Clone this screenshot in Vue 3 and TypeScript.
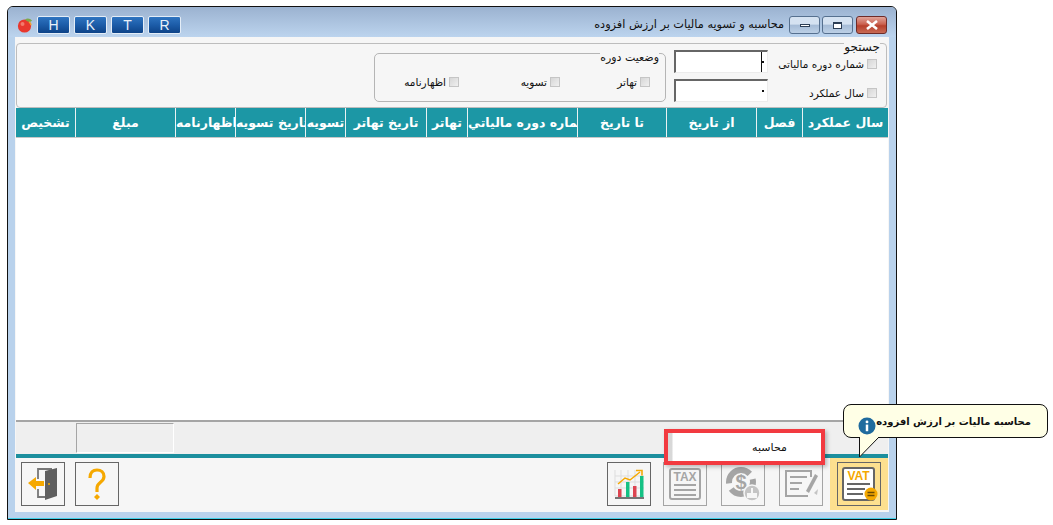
<script setup lang="ts">
const quickButtons = ['H', 'K', 'T', 'R'];

const columns = [
  { label: 'سال عملکرد', width: 86 },
  { label: 'فصل', width: 46 },
  { label: 'از تاریخ', width: 90 },
  { label: 'تا تاریخ', width: 89 },
  { label: 'شماره دوره مالیاتي', width: 110 },
  { label: 'تهاتر', width: 41 },
  { label: 'تاریخ تهاتر', width: 81 },
  { label: 'تسویه', width: 40 },
  { label: 'تاریخ تسویه', width: 70 },
  { label: 'اظهارنامه', width: 60 },
  { label: 'مبلغ', width: 100 },
  { label: 'تشخیص', width: 59 },
];

const statusOptions = ['تهاتر', 'تسویه', 'اظهارنامه'];
</script>

<template>
  <div class="page">
    <div class="window">
      <div class="titlebar">
        <div class="controls">
          <button class="ctl close">
            <svg width="14" height="10" viewBox="0 0 14 10"><path d="M2 1l10 8M12 1L2 9" stroke="#fff" stroke-width="2.6" /></svg>
          </button>
          <button class="ctl"><span class="max-glyph"></span></button>
          <button class="ctl"><span class="min-glyph"></span></button>
        </div>
        <div class="title">محاسبه و تسویه مالیات بر ارزش افزوده</div>
        <div class="spacer"></div>
        <div class="quick">
          <button v-for="b in quickButtons" :key="b" class="quick-btn">{{ b }}</button>
        </div>
        <svg class="apple" width="16" height="16" viewBox="0 0 16 16">
          <circle cx="7.5" cy="9" r="6.6" fill="#e8382e" />
          <circle cx="5.5" cy="7" r="2" fill="#f47a6c" />
          <path d="M8 2.6C10 .9 13 1.2 15 3.6 13.6 5.8 10.5 5 8 2.6Z" fill="#7fa84a" />
          <path d="M12 5c1.4.8 2 2 2 3.200" stroke="#f0a030" stroke-width="1.500" fill="none" />
        </svg>
      </div>

      <div class="body">
        <div class="filter">
          <fieldset class="search">
            <legend>جستجو</legend>
            <div class="search-row">
              <label class="check"><i class="box"></i><span>شماره دوره مالیاتی</span></label>
              <div class="field"><span class="caret"></span><span class="dot"></span></div>
            </div>
            <div class="search-row">
              <label class="check"><i class="box"></i><span>سال عملکرد</span></label>
              <div class="field"><span class="dot"></span></div>
            </div>
          </fieldset>
          <fieldset class="status">
            <legend>وضعیت دوره</legend>
            <label v-for="o in statusOptions" :key="o" class="check"><i class="box"></i><span>{{ o }}</span></label>
          </fieldset>
        </div>

        <div class="grid-head">
          <div
            v-for="c in columns"
            :key="c.label"
            class="col"
            :style="{ width: c.width + 'px' }"
          ><span>{{ c.label }}</span></div>
        </div>

        <div class="grid-body"></div>

        <div class="statusbar">
          <div class="sum-cell"></div>
        </div>

        <div class="toolbar">
          <div class="tools-left">
            <button class="tool">
              <svg width="34" height="36" viewBox="0 0 34 36">
                <path d="M26 3H12v10M12 23v8h8" fill="none" stroke="#777" stroke-width="1.800" />
                <path d="M19 5l12-3v28l-12 4Z" fill="#5f5f5f" />
                <circle cx="23" cy="18" r="1" fill="#f5a800" />
                <path d="M2 17l8-6v4h8v5h-8v4Z" fill="#f5a800" />
              </svg>
            </button>
            <button class="tool">
              <svg width="18" height="33" viewBox="0 0 18 33">
                <path d="M2 10C2 4.500 5 2 9 2s7 2.500 7 6.500c0 6-7 5.500-7 11.500v4" fill="none" stroke="#f5a800" stroke-width="3.200" />
                <path d="M9 26l3 3-3 3-3-3Z" fill="#f5a800" />
              </svg>
            </button>
          </div>

          <div class="tools-right">
            <button class="tool">
              <svg width="34" height="34" viewBox="0 0 34 34">
                <path d="M3 3v26h29M3 9h29M3 15h29M3 21h29M9 3v26M16 3v26M23 3v26M30 3v26" stroke="#ddd" fill="none" />
                <rect x="6" y="22" width="3.500" height="8" fill="#dd4450" />
                <rect x="14" y="15" width="3.500" height="15" fill="#14c184" />
                <rect x="21" y="19" width="3.500" height="11" fill="#dd4450" />
                <rect x="28" y="9" width="3.500" height="21" fill="#14c184" />
                <path d="M3 31h29" stroke="#555" stroke-width="1.600" />
                <path d="M6 17l7-6 5 2 10-8" stroke="#f5a800" stroke-width="1.500" fill="none" />
                <path d="M24 3.500h6v5" stroke="#f5a800" stroke-width="1.500" fill="none" />
              </svg>
            </button>
            <button class="tool dim">
              <svg width="34" height="34" viewBox="0 0 34 34">
                <rect x="2" y="2" width="30" height="30" rx="2" fill="#f6f6f6" stroke="#a5a5a5" stroke-width="2" />
                <text x="17" y="14" text-anchor="middle" class="icon-text grey">TAX</text>
                <path d="M6 18h22M6 23h22M6 28h22" stroke="#a5a5a5" stroke-width="1.800" />
              </svg>
            </button>
            <button class="tool dim">
              <svg width="36" height="36" viewBox="0 0 36 36">
                <circle cx="16" cy="16" r="12" fill="none" stroke="#a5a5a5" stroke-width="6" stroke-dasharray="30 6" />
                <text x="16" y="23" text-anchor="middle" class="icon-dollar">$</text>
                <circle cx="27" cy="27" r="8" fill="#c4c4c4" stroke="#f6f6f6" stroke-width="1.500" />
                <path d="M27 22v5M23 28h8v3h-8Z" stroke="#f6f6f6" stroke-width="2" fill="#f6f6f6" />
              </svg>
            </button>
            <button class="tool dim">
              <svg width="36" height="32" viewBox="0 0 36 32">
                <path d="M28 9V3H3v25h22" fill="none" stroke="#a5a5a5" stroke-width="2" />
                <path d="M7 9h17M7 15h12M7 21h9" stroke="#a5a5a5" stroke-width="2" />
                <path d="M32 6l3 2-9 17-3-2Z" fill="#a5a5a5" />
                <path d="M31 25l4-4-1 6Z" fill="#c4c4c4" />
              </svg>
            </button>
            <div class="vat-slot">
              <button class="tool">
                <svg width="38" height="36" viewBox="0 0 38 36">
                  <rect x="3" y="2" width="31" height="32" rx="2" fill="#fff" stroke="#666" stroke-width="2" />
                  <text x="18.500" y="14" text-anchor="middle" class="icon-text orange">VAT</text>
                  <path d="M7 18h23M7 23h18M7 28h16" stroke="#666" stroke-width="1.800" />
                  <circle cx="31" cy="28" r="6.500" fill="#f5a800" />
                  <path d="M27.500 26.500h7M27.500 29.500h7" stroke="#6b4a00" stroke-width="1.500" />
                </svg>
              </button>
            </div>
          </div>

          <div class="popup"><span>محاسبه</span></div>
        </div>
      </div>
    </div>

    <div class="tip">
      <span>محاسبه مالیات بر ارزش افزوده</span>
      <svg class="info" width="18" height="18" viewBox="0 0 19 19">
        <circle cx="9.500" cy="9.500" r="9" fill="#1f6b9e" />
        <circle cx="9.500" cy="5.200" r="1.500" fill="#fff" />
        <rect x="8.200" y="8" width="2.600" height="7" fill="#fff" />
      </svg>
      <svg class="tail" width="30" height="22" viewBox="0 0 30 22">
        <path d="M.5 0V20L20 0" fill="#ffffe6" stroke="#111" stroke-width="1" />
      </svg>
    </div>
  </div>
</template>

<style>
html, body {
  margin: 0;
  background: #fff;
}
</style>

<style scoped>
.page {
  position: relative;
  width: 1053px;
  height: 525px;
  padding: 6px 0 0 7px;
  box-sizing: border-box;
  overflow: hidden;
  font-family: "DejaVu Sans", Tahoma, sans-serif;
  color: #111;
}

.window {
  width: 890px;
  height: 514px;
  box-sizing: border-box;
  border: 1px solid #111;
  border-radius: 6px 6px 0 0;
  background: #b9d2ec;
  box-shadow: inset 0 -1px 0 #3fd0e8;
  padding: 0 7px 7px;
  display: flex;
  flex-direction: column;
}

.titlebar {
  height: 30px;
  flex: none;
  box-sizing: border-box;
  margin: 0 -7px;
  padding: 9px 9px 0 9px;
  border-radius: 5px 5px 0 0;
  background: linear-gradient(#9bb2d0, #bcd4ee);
  display: flex;
  flex-direction: row-reverse;
  align-items: flex-start;
}

.controls {
  display: flex;
  flex-direction: row-reverse;
  gap: 2px;
}

.ctl {
  width: 31px;
  height: 18px;
  padding: 0;
  border: 1px solid #56708f;
  border-radius: 3px;
  background: linear-gradient(#d5e2f1 45%, #a5bbd6 50%, #bcd0e6);
  display: flex;
  align-items: center;
  justify-content: center;
}

.close {
  margin-left: 1px;
  border-color: #6e2b28;
  background: linear-gradient(#e0a49a 0, #cb6250 45%, #b7402c 55%, #c76a55);
}

.max-glyph {
  width: 9px;
  height: 7px;
  box-sizing: border-box;
  border: 2px solid #2c3e55;
  border-width: 2px 1px 1px;
  background: #fff;
}

.min-glyph {
  width: 10px;
  height: 3px;
  border: 1px solid #2c3e55;
  box-sizing: border-box;
  background: #fff;
}

.title {
  margin: 2px 5px 0 0;
  font-size: 11.300px;
  line-height: 14px;
  direction: rtl;
  white-space: nowrap;
}

.spacer {
  flex: 1;
}

.quick {
  display: flex;
  gap: 4px;
}

.quick-btn {
  width: 33px;
  height: 18px;
  padding: 0;
  border: 1px solid #e4edf7;
  border-radius: 2px;
  background: linear-gradient(#2f74c0, #1c5ca8 50%, #0e4388);
  color: #e8f0fa;
  font-family: "Liberation Sans", Arial, sans-serif;
  font-size: 14px;
  line-height: 16px;
}

.apple {
  margin: 1px 4px 0 0;
}

.body {
  flex: 1;
  background: #f6f6f6;
  display: flex;
  flex-direction: column;
  min-height: 0;
  position: relative;
}

.filter {
  height: 65px;
  flex: none;
  box-sizing: border-box;
  margin: 6px 2px 0 1px;
  border: 1px solid #bdbdbd;
  border-radius: 4px;
  display: flex;
  direction: rtl;
  position: relative;
}

fieldset {
  border: 0;
  margin: 0;
  padding: 0;
  min-width: 0;
}

.search {
  display: flex;
  flex-direction: column;
  width: 212px;
  padding-top: 6px;
  box-sizing: border-box;
  position: relative;
}

.search legend,
.status legend {
  position: absolute;
  top: -3px;
  right: 6px;
  padding: 0;
  line-height: 13px;
  background: #f6f6f6;
}

.search legend {
  font-size: 12px;
}

.status legend {
  font-size: 11px;
}

.search-row {
  display: flex;
  justify-content: space-between;
  align-items: flex-start;
  height: 29px;
  padding-right: 9px;
}

.search-row .check {
  margin-top: 8px;
}

.check {
  display: flex;
  align-items: center;
  gap: 3px;
  height: 12px;
  white-space: nowrap;
  font-size: 10.500px;
}

.box {
  width: 8px;
  height: 8px;
  flex: none;
  border: 1px solid #c5c5c5;
  background: linear-gradient(135deg, #d6d6d6, #f0f0f0);
}

.field {
  width: 94px;
  height: 23px;
  box-sizing: border-box;
  background: #fff;
  border: 1px solid #ececec;
  border-top: 2px solid #666;
  border-left: 2px solid #666;
  position: relative;
}

.dot {
  position: absolute;
  right: 3px;
  top: 9px;
  width: 2px;
  height: 2px;
  background: #111;
}

.caret {
  position: absolute;
  right: 5px;
  top: 0;
  width: 1px;
  height: 20px;
  background: #111;
}

.status {
  position: absolute;
  left: 357px;
  top: 9px;
  width: 292px;
  height: 49px;
  box-sizing: border-box;
  border: 1px solid #b5b5b5;
  border-radius: 5px;
  display: flex;
  padding: 22px 15px 0 0;
}

.status .check:nth-of-type(1) {
  width: 90px;
}

.status .check:nth-of-type(2) {
  width: 101px;
}

.grid-head {
  display: flex;
  direction: rtl;
  height: 30px;
  margin: 0 1px;
  flex: none;
  background: #1c97a5;
  border-bottom: 1px solid #c8c8c8;
  box-sizing: border-box;
}

.col {
  flex: none;
  box-sizing: border-box;
  height: 100%;
  color: #fff;
  font-size: 12.500px;
  font-weight: 700;
  border-left: 1px solid #e9f2f3;
  display: flex;
  direction: ltr;
  align-items: center;
  overflow: hidden;
  white-space: nowrap;
}

.col:last-child {
  border-left: 0;
}

/* auto margins centre the label; a long one runs off to the right and is cut there */
.col span {
  flex: none;
  margin: 0 auto;
  direction: rtl;
}

.grid-body {
  flex: 1;
  margin: 0 1px;
  background: #fff;
  min-height: 0;
}

.statusbar {
  height: 38px;
  flex: none;
  box-sizing: border-box;
  margin: 0 1px;
  border-top: 2px solid #a5a5a5;
  border-bottom: 4px solid #1c8f9e;
  background: #efefef;
  padding: 1px 0 0 60px;
}

.sum-cell {
  width: 98px;
  height: 30px;
  box-sizing: border-box;
  border: 1px solid #fff;
  border-top: 1px solid #a5a5a5;
  border-left: 1px solid #a5a5a5;
}

.toolbar {
  height: 54px;
  flex: none;
  display: flex;
  justify-content: space-between;
  padding: 4px 1px 0 6px;
  box-sizing: border-box;
  position: relative;
}

.tools-left,
.tools-right {
  display: flex;
  align-items: flex-start;
}

.tools-left {
  gap: 10px;
}

.tools-right {
  gap: 14px;
}

.tool {
  width: 44px;
  height: 44px;
  padding: 0;
  box-sizing: border-box;
  border: 1px solid #666;
  background: #f6f6f6;
  display: flex;
  align-items: center;
  justify-content: center;
}

.tool.dim {
  border-color: #a5a5a5;
}

.tools-right > .tool:nth-child(2) {
  margin-left: -2px;
}

.vat-slot {
  width: 58px;
  height: 52px;
  margin: -4px 0 0 -7px;
  background: #fde08f;
  display: flex;
  align-items: center;
  justify-content: center;
}

.vat-slot .tool {
  background: #fde08f;
}

.icon-text {
  font-family: "Liberation Sans", Arial, sans-serif;
  font-size: 12px;
  font-weight: 700;
}

.grey {
  fill: #a5a5a5;
}

.orange {
  fill: #f5a800;
}

.icon-dollar {
  font-family: "Liberation Sans", Arial, sans-serif;
  font-size: 20px;
  font-weight: 700;
  fill: #a5a5a5;
}

/* popup menu over the status bar */
.popup {
  position: absolute;
  left: 649px;
  top: -29px;
  width: 161px;
  height: 36px;
  box-sizing: border-box;
  border: 4px solid #f23a40;
  background: linear-gradient(90deg, #d8d8d8 4px, #fff 5px);
  box-shadow: 2px 2px 4px rgba(0, 0, 0, 0.25);
  display: flex;
  align-items: center;
  justify-content: center;
  padding-left: 50px;
  font-size: 11px;
  direction: rtl;
}

.tip {
  position: absolute;
  left: 843px;
  top: 404px;
  width: 205px;
  height: 34px;
  box-sizing: border-box;
  border: 1px solid #111;
  border-radius: 8px;
  background: #ffffe6;
  display: flex;
  align-items: center;
  justify-content: flex-end;
  padding-right: 16px;
  font-size: 10px;
  font-weight: 700;
  white-space: nowrap;
}

.tip span {
  direction: rtl;
}

.info {
  position: absolute;
  left: 14px;
  top: 12px;
}

.tail {
  position: absolute;
  left: 15px;
  top: 32px;
}
</style>
